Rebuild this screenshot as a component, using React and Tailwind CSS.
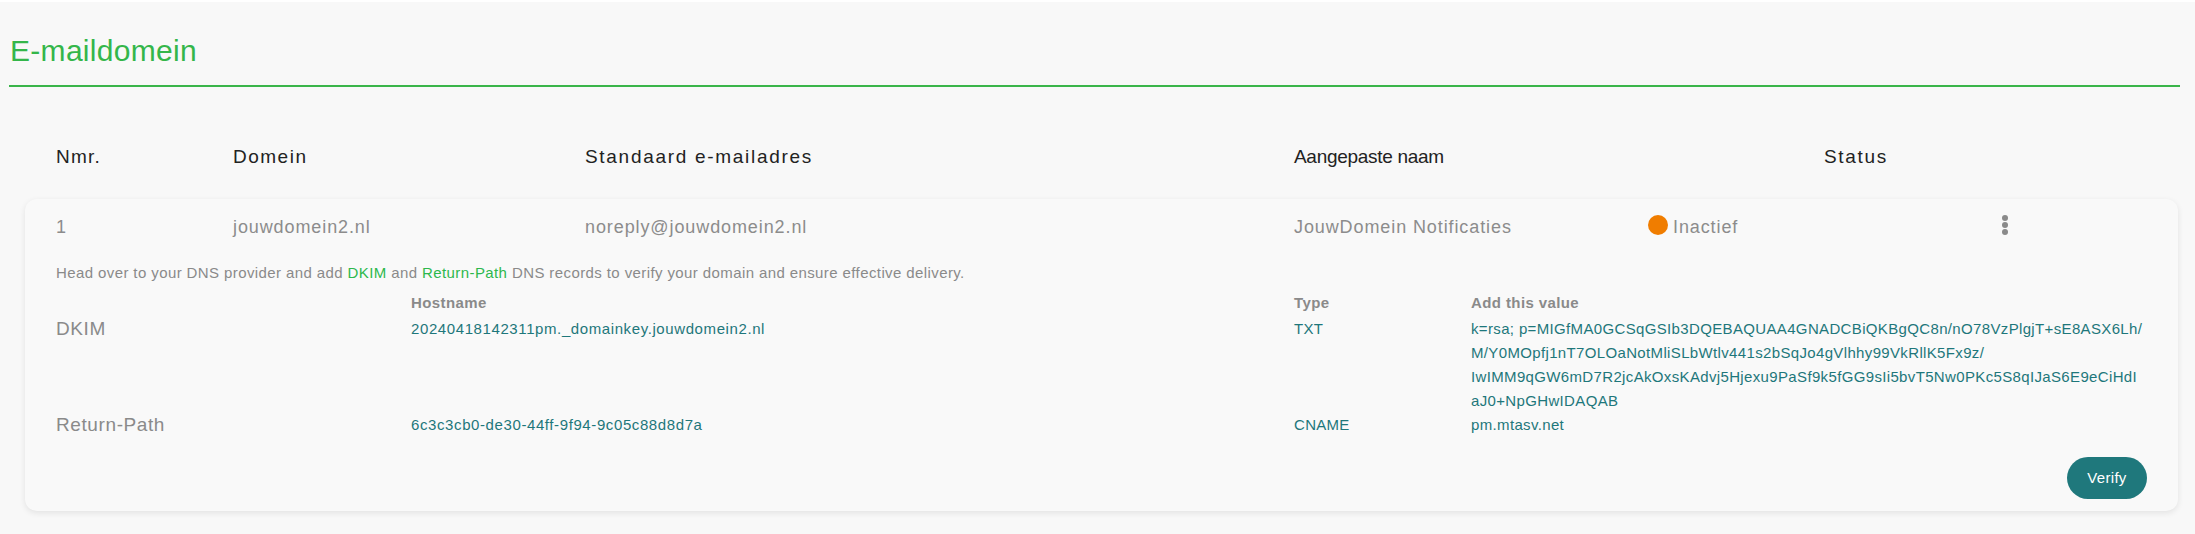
import React from 'react';

const font = { fontFamily: '"Liberation Sans", Arial, sans-serif' };

const dkimValue = [
    'k=rsa; p=MIGfMA0GCSqGSIb3DQEBAQUAA4GNADCBiQKBgQC8n/nO78VzPlgjT+sE8ASX6Lh/',
    'M/Y0MOpfj1nT7OLOaNotMliSLbWtlv441s2bSqJo4gVlhhy99VkRllK5Fx9z/',
    'IwIMM9qGW6mD7R2jcAkOxsKAdvj5Hjexu9PaSf9k5fGG9sIi5bvT5Nw0PKc5S8qIJaS6E9eCiHdI',
    'aJ0+NpGHwIDAQAB',
];

const records = [
    { label: 'DKIM', host: '20240418142311pm._domainkey.jouwdomein2.nl', type: 'TXT', value: dkimValue },
    { label: 'Return-Path', host: '6c3c3cb0-de30-44ff-9f94-9c05c88d8d7a', type: 'CNAME', value: ['pm.mtasv.net'] },
];

const App = () => {
    return (
        <div className="min-h-[534px] w-full bg-[#f8f8f8] border-t-2 border-white" style={font}>
            {/* title */}
            <div className="pl-[10px] pt-[31px] text-[30px] leading-[36px] tracking-[0.3px] text-[#34b64a]">E-maildomein</div>
            <div className="ml-[9px] mr-[15px] mt-[16px] h-[2px] bg-[#3ab54a]" />

            {/* table header */}
            <div className="flex pl-[56px] mt-[58px] text-[19px] leading-[24px] text-[#222222]">
                <div className="w-[177px] tracking-[1.2px]">Nmr.</div>
                <div className="w-[352px] tracking-[1.5px]">Domein</div>
                <div className="w-[709px] tracking-[1.7px]">Standaard e-mailadres</div>
                <div className="w-[530px] tracking-[-0.3px]">Aangepaste naam</div>
                <div className="tracking-[1.7px]">Status</div>
            </div>

            {/* domain card */}
            <div className="ml-[25px] mr-[17px] mt-[30px] rounded-xl bg-[#f9f9f9] shadow-[0_2px_6px_rgba(0,0,0,0.09)] pl-[31px] pr-[31px] pt-[16px] pb-[12px]">
                <div className="flex items-center text-[18px] leading-[24px] tracking-[0.9px] text-[#8c8c8c]">
                    <div className="w-[177px]">1</div>
                    <div className="w-[352px]">jouwdomein2.nl</div>
                    <div className="w-[709px]">noreply@jouwdomein2.nl</div>
                    <div className="w-[354px]">JouwDomein Notificaties</div>
                    <div className="w-[355px] flex items-center">
                        <span className="w-[20px] h-[20px] rounded-full bg-[#f07d00] -mt-[5px]" />
                        <span className="ml-[5px]">Inactief</span>
                    </div>
                    <button className="flex flex-col gap-[1px] -mt-[5px] ml-[-1px]">
                        <span className="w-[6px] h-[6px] rounded-full bg-[#8a8a8a]" />
                        <span className="w-[6px] h-[6px] rounded-full bg-[#8a8a8a]" />
                        <span className="w-[6px] h-[6px] rounded-full bg-[#8a8a8a]" />
                    </button>
                </div>

                <p className="mt-[24px] text-[15px] leading-[20px] tracking-[0.4px] text-[#8a8a8a]">
                    Head over to your DNS provider and add <span className="text-[#2db84d]">DKIM</span> and{' '}
                    <span className="text-[#2db84d]">Return-Path</span> DNS records to verify your domain and ensure effective delivery.
                </p>

                <div className="flex mt-[10px] text-[15px] leading-[20px] font-semibold tracking-[0.4px] text-[#8a8a8a]">
                    <div className="w-[355px]" />
                    <div className="w-[883px]">Hostname</div>
                    <div className="w-[177px]">Type</div>
                    <div>Add this value</div>
                </div>

                <div className="mt-[4px]">
                    {records.map(rec => (
                        <div key={rec.label} className="flex items-start">
                            <div className="w-[355px] text-[19px] leading-[24px] tracking-[0.6px] text-[#8a8a8a]">{rec.label}</div>
                            <div className="w-[883px] text-[15px] leading-[24px] tracking-[0.6px] text-[#1e777b]">{rec.host}</div>
                            <div className="w-[177px] text-[15px] leading-[24px] tracking-[0.3px] text-[#1e777b]">{rec.type}</div>
                            <div className="text-[15px] leading-[24px] tracking-[0.35px] text-[#1e777b]">
                                {rec.value.map(line => (
                                    <div key={line}>{line}</div>
                                ))}
                            </div>
                        </div>
                    ))}
                </div>

                <div className="flex justify-end mt-[20px]">
                    <button className="w-[80px] h-[42px] rounded-full bg-[#1f787c] text-white text-[15px] tracking-[0.3px]">Verify</button>
                </div>
            </div>
        </div>
    );
};

export default App;
